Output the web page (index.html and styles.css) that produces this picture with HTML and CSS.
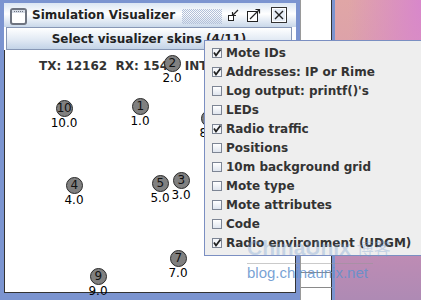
FILE: index.html
```html
<!DOCTYPE html>
<html lang="en">

<head>
    <meta charset="utf-8">
    <title>Simulation Visualizer</title>
    <link rel="stylesheet" href="styles.css">
</head>

<body>
    <div class="desk">
        <div class="frame">
            <div class="titlebar">
                <svg class="ficon" width="17" height="17" viewBox="0 0 17 17">
                    <rect x="1" y="1" width="15" height="15" rx="2" fill="#fff" stroke="#6e7480" stroke-width="2" />
                    <rect x="2" y="2" width="13" height="3" fill="#d6dce6" />
                    <line x1="4" y1="3.5" x2="13" y2="3.5" stroke="#6e7480" stroke-width="1" stroke-dasharray="1 1" />
                </svg>
                <span class="ftitle">Simulation Visualizer</span>
                <span class="bumps"></span>
                <!-- iconify, maximize, close -->
                <svg class="tbtn" width="16" height="16" viewBox="0 0 16 16">
                    <rect x="2.5" y="8.5" width="5" height="5" fill="#fff" stroke="#222" />
                    <path d="M12 3 L6.5 8.5 M6.5 5 V8.5 H10" fill="none" stroke="#222" stroke-width="1.2" />
                </svg>
                <svg class="tbtn" width="16" height="16" viewBox="0 0 16 16">
                    <rect x="1.5" y="4.5" width="10" height="10" fill="#fff" stroke="#222" />
                    <path d="M4 12 L13 3 M9.5 2.5 H13.5 V6.5" fill="none" stroke="#222" stroke-width="1.2" />
                </svg>
                <svg class="tbtn close" width="16" height="16" viewBox="0 0 16 16">
                    <rect x="0.5" y="0.5" width="15" height="15" fill="#e6edf6" stroke="#333" />
                    <rect x="1.5" y="1.5" width="13" height="13" fill="none" stroke="#fff" />
                    <path d="M4 4 L12 12 M12 4 L4 12" stroke="#222" stroke-width="1.4" />
                </svg>
            </div>
            <button class="skins">Select visualizer skins (4/11)</button>
            <div class="canvas">
                <div class="stats">TX: 12162  RX: 1542  INT: 0</div>
                <div class="mote" style="left:59px; top:58px"><span class="dot">10</span><span class="lbl">10.0</span></div>
                <div class="mote" style="left:135px; top:56px"><span class="dot">1</span><span class="lbl">1.0</span></div>
                <div class="mote" style="left:167px; top:13px"><span class="dot">2</span><span class="lbl">2.0</span></div>
                <div class="mote" style="left:204px; top:68px"><span class="dot">8</span><span class="lbl">8.0</span></div>
                <div class="mote" style="left:69px; top:135px"><span class="dot">4</span><span class="lbl">4.0</span></div>
                <div class="mote" style="left:155px; top:133px"><span class="dot">5</span><span class="lbl">5.0</span></div>
                <div class="mote" style="left:176px; top:130px"><span class="dot">3</span><span class="lbl">3.0</span></div>
                <div class="mote" style="left:173px; top:208px"><span class="dot">7</span><span class="lbl">7.0</span></div>
                <div class="mote" style="left:93px; top:226px"><span class="dot">9</span><span class="lbl">9.0</span></div>
            </div>
        </div>
        <div class="backwin">
            <div class="bw-fill"></div>
            <div class="bw-row"></div>
            <div class="bw-row last"></div>
        </div>
        <div class="wall"></div>
    </div>

    <div class="popup">
        <div class="item"><svg class="box" width="10" height="10" viewBox="0 0 10 10"><rect x="0.5" y="0.5" width="9" height="9" fill="#f4f6fa" stroke="#7d8594" /><path d="M2 4.5 L4 7.5 L8.5 1.5" fill="none" stroke="#222" stroke-width="1.8" /></svg>Mote IDs</div>
        <div class="item"><svg class="box" width="10" height="10" viewBox="0 0 10 10"><rect x="0.5" y="0.5" width="9" height="9" fill="#f4f6fa" stroke="#7d8594" /><path d="M2 4.5 L4 7.5 L8.5 1.5" fill="none" stroke="#222" stroke-width="1.8" /></svg>Addresses: IP or Rime</div>
        <div class="item"><span class="box off"></span>Log output: printf()'s</div>
        <div class="item"><span class="box off"></span>LEDs</div>
        <div class="item"><svg class="box" width="10" height="10" viewBox="0 0 10 10"><rect x="0.5" y="0.5" width="9" height="9" fill="#f4f6fa" stroke="#7d8594" /><path d="M2 4.5 L4 7.5 L8.5 1.5" fill="none" stroke="#222" stroke-width="1.8" /></svg>Radio traffic</div>
        <div class="item"><span class="box off"></span>Positions</div>
        <div class="item"><span class="box off"></span>10m background grid</div>
        <div class="item"><span class="box off"></span>Mote type</div>
        <div class="item"><span class="box off"></span>Mote attributes</div>
        <div class="item"><span class="box off"></span>Code</div>
        <div class="item"><svg class="box" width="10" height="10" viewBox="0 0 10 10"><rect x="0.5" y="0.5" width="9" height="9" fill="#f4f6fa" stroke="#7d8594" /><path d="M2 4.5 L4 7.5 L8.5 1.5" fill="none" stroke="#222" stroke-width="1.8" /></svg>Radio environment (UDGM)</div>
    </div>

    <div class="mark">
        <div class="mark-big">ChinaUnix <span class="cjk">博客</span><sup>.net</sup></div>
        <div class="mark-url">blog.chinaunix.net</div>
    </div>
</body>

</html>
```

FILE: styles.css
```css
html, body {
    margin: 0;
    width: 421px;
    height: 300px;
    overflow: hidden;
}

body {
    position: relative;
    font-family: "DejaVu Sans", sans-serif;
    font-size: 12px;
    color: #333;
}

.desk {
    display: flex;
    height: 300px;
}

/* internal frame */
.frame {
    width: 300px;
    height: 300px;
    box-sizing: border-box;
    border: 4px solid #7b94d0;
    border-top-width: 3px;
    border-bottom-width: 7px;
    display: flex;
    flex-direction: column;
    flex-shrink: 0;
}

.titlebar {
    height: 24px;
    display: flex;
    align-items: center;
    padding-left: 6px;
    background: linear-gradient(#dbe6f3, #ffffff 45%, #c9d8ea);
}

.ficon {
    margin-top: 2px;
}

.ftitle {
    margin-left: 5px;
    font-weight: bold;
    color: #222;
}

.bumps {
    width: 40px;
    height: 15px;
    margin-left: 7px;
    margin-top: 2px;
    background-image: conic-gradient(#b3c0d8 25%, transparent 0 50%, #b3c0d8 0 75%, transparent 0);
    background-size: 2px 2px;
}

.tbtn {
    margin-left: 4px;
}

.tbtn.close {
    margin-left: 9px;
}

.skins {
    height: 23px;
    margin: 0 4px 0 2px;
    padding: 0;
    border: 1px solid #8797b5;
    border-radius: 0;
    background: linear-gradient(#ffffff, #e2eaf4 55%, #c3d3e7);
    font-family: "DejaVu Sans", sans-serif;
    font-size: 12px;
    font-weight: bold;
    color: #222;
}

.canvas {
    position: relative;
    flex: 1;
    background: #fff;
    border: 1px solid #333;
    border-top: none;
}

.stats {
    padding: 9px 0 0 34px;
    line-height: 14px;
    font-weight: bold;
    color: #333;
    white-space: pre;
}

.mote {
    position: absolute;
    width: 40px;
    margin-left: -20px;
    margin-top: -8px;
    display: flex;
    flex-direction: column;
    align-items: center;
}

.dot {
    width: 15px;
    height: 15px;
    border: 1px solid #2a2a2a;
    border-radius: 50%;
    background: #808080;
    color: #111;
    font-size: 12px;
    line-height: 15px;
    text-align: center;
    letter-spacing: -0.5px;
}

.lbl {
    font-size: 12px;
    line-height: 13px;
    color: #000;
}

/* window behind */
.backwin {
    width: 31px;
    height: 300px;
    flex-shrink: 0;
    display: flex;
    flex-direction: column;
    background: #fff;
    border-left: 1px solid #9a9a9a;
    border-right: 3px solid #7b94d0;
    box-shadow: inset -1px 0 #333;
}

.bw-fill {
    height: 272px;
}

.bw-row {
    height: 14px;
    border-top: 1px solid #8a8a8a;
}

.bw-row.last {
    height: 12px;
}

.wall {
    flex: 1;
    background:
        radial-gradient(ellipse at 100% 0%, #d887cb 0%, rgba(216, 135, 203, 0) 60%),
        linear-gradient(#e0a6a6 0%, #d79bae 40%, #c38cb4 80%, #ae8ab4 100%);
}

/* popup menu */
.popup {
    position: absolute;
    left: 204px;
    top: 40px;
    width: 230px;
    height: 212px;
    padding-top: 2px;
    background: #eeeeee;
    border: 1px solid #7b8fc2;
}

.item {
    height: 19px;
    display: flex;
    align-items: center;
    padding-left: 7px;
    font-weight: bold;
    color: #333;
    white-space: nowrap;
}

.box {
    width: 10px;
    height: 10px;
    margin-right: 4px;
    flex-shrink: 0;
    overflow: visible;
}

.box.off {
    box-sizing: border-box;
    border: 1px solid #7d8594;
    background: linear-gradient(#ffffff, #dfe5ee);
}

/* watermark */
.mark {
    position: absolute;
    left: 247px;
    top: 232px;
    width: 126px;
    pointer-events: none;
}

.mark-big {
    font-family: "Liberation Sans", "Noto Sans CJK SC", sans-serif;
    font-size: 21px;
    font-weight: bold;
    line-height: 26px;
    color: rgba(120, 160, 210, 0.35);
    white-space: nowrap;
    border-bottom: 1px solid rgba(150, 150, 150, 0.5);
}

.mark-big .cjk {
    font-size: 17px;
    font-weight: normal;
}

.mark-big sup {
    font-size: 7px;
    margin-left: -14px;
}

.mark-url {
    font-family: "Liberation Sans", sans-serif;
    font-size: 15px;
    line-height: 18px;
    color: rgba(95, 145, 205, 0.85);
}
```
